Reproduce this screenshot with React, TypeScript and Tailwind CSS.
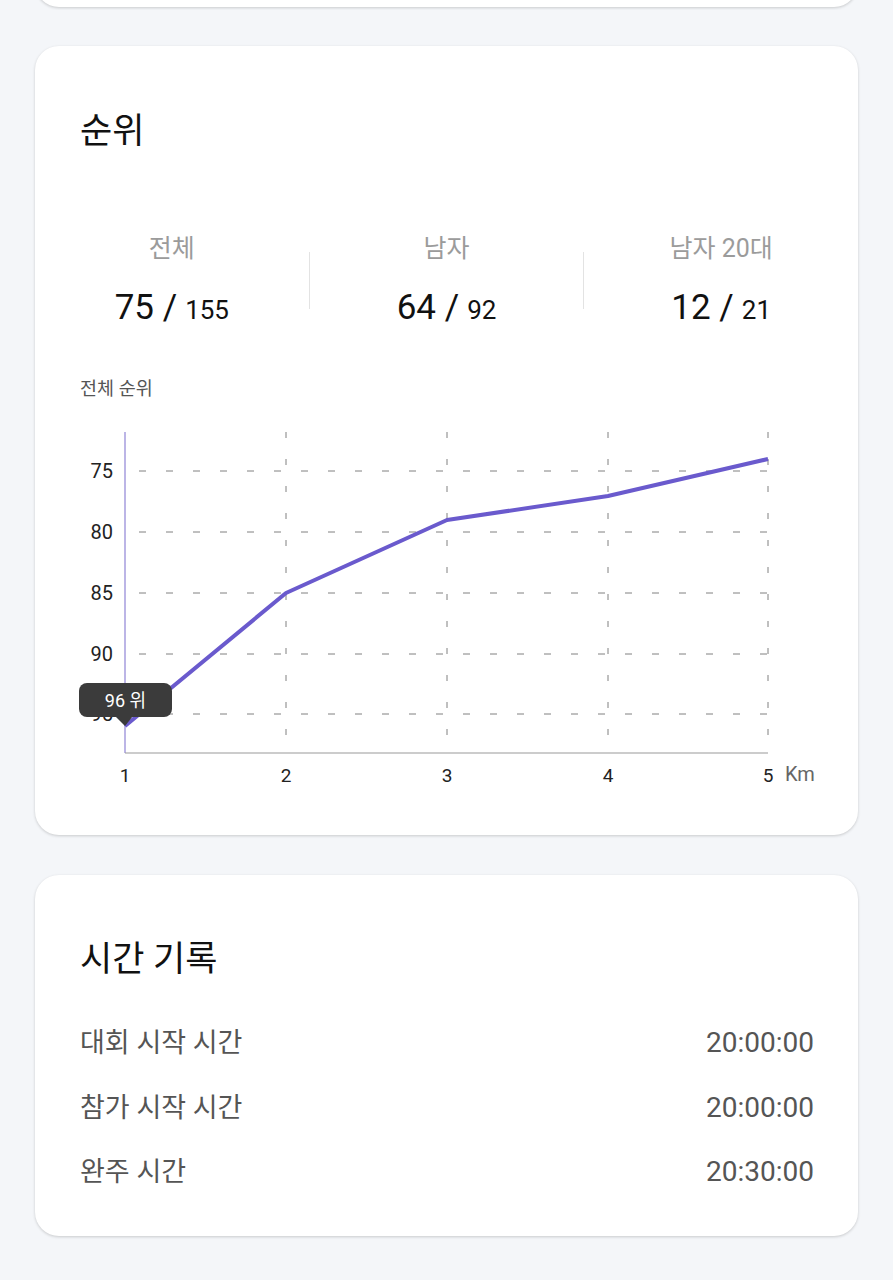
import React from "react";

const FONT = 'Roboto, "Noto Sans CJK KR", sans-serif';

function Chart() {
  const yTicks = [
    { v: 75, y: 51 },
    { v: 80, y: 112 },
    { v: 85, y: 173 },
    { v: 90, y: 234 },
    { v: 95, y: 294 },
  ];
  const xs = [90, 251, 412, 573, 733];
  const pts = [
    [90, 306],
    [251, 173],
    [412, 100],
    [573, 76],
    [733, 39],
  ];
  return (
    <div className="relative h-[380px] w-full">
      <svg width="823" height="380" viewBox="0 0 823 380" className="block">
        {yTicks.map((t) => (
          <line key={t.v} x1={90} x2={733} y1={t.y} y2={t.y} stroke="#808080" strokeWidth={1} strokeDasharray="7 20" strokeDashoffset={-14} />
        ))}
        {xs.slice(1).map((x) => (
          <line key={x} x1={x} x2={x} y1={12} y2={333} stroke="#808080" strokeWidth={1} strokeDasharray="6 21" />
        ))}
        <line x1={90} x2={90} y1={12} y2={333} stroke="#8f84d6" strokeWidth={1.2} />
        <line x1={90} x2={733} y1={333} y2={333} stroke="#9a9a9a" strokeWidth={1.2} />
        {yTicks.map((t) => (
          <text key={t.v} x={78} y={t.y + 7} textAnchor="end" fontSize={20} fill="#222" fontFamily={FONT}>
            {t.v}
          </text>
        ))}
        {xs.map((x, i) => (
          <text key={x} x={x} y={362} textAnchor="middle" fontSize={19} fill="#222" fontFamily={FONT}>
            {i + 1}
          </text>
        ))}
        <text x={750} y={361} fontSize={20} fill="#666" fontFamily={FONT}>
          Km
        </text>
        <polyline
          points={pts.map((p) => p.join(",")).join(" ")}
          fill="none"
          stroke="#6a5acd"
          strokeWidth={4}
          strokeLinejoin="round"
        />
        <path d="M80 296 L90 306 L98 296 Z" fill="#3b3b3b" />
      </svg>
      <div className="absolute left-[44px] top-[263px] flex h-[34px] w-[93px] items-center justify-center rounded-[8px] bg-[#3b3b3b] text-[18px] text-white">
        96 위
      </div>
    </div>
  );
}

function Stat({ label, big, small }: { label: string; big: string; small: string }) {
  return (
    <div className="flex flex-1 flex-col items-center">
      <div className="text-[25px] leading-[32px] text-[#9b9b9b]">{label}</div>
      <div className="mt-[23px] flex items-baseline leading-[40px] text-[#111]">
        <span className="text-[35px]">{big} /</span>
        <span className="ml-[8px] text-[26px]">{small}</span>
      </div>
    </div>
  );
}

function Row({ label, value }: { label: string; value: string }) {
  return (
    <div className="flex items-center justify-between pl-[45px] pr-[44px] leading-[40px] text-[#555]">
      <span className="text-[27px]">{label}</span>
      <span className="text-[28px]">{value}</span>
    </div>
  );
}

export default function App() {
  return (
    <div className="min-h-[1280px] w-full bg-[#f4f6f9] px-[35px]" style={{ fontFamily: FONT }}>
      <div className="h-[10px] overflow-hidden">
        <div className="-mt-[53px] h-[60px] rounded-[24px] bg-white shadow-[0_1px_3px_rgba(0,0,0,0.18)]" />
      </div>
      <div className="mt-[36px] rounded-[24px] bg-white pb-[35px] pt-[66px] shadow-[0_1px_3px_rgba(0,0,0,0.18)]">
        <div className="px-[45px] text-[35px] leading-[40px] text-[#111]">순위</div>
        <div className="mt-[81px] flex">
          <Stat label="전체" big="75" small="155" />
          <div className="mt-[19px] h-[57px] w-px bg-[#e3e3e3]" />
          <Stat label="남자" big="64" small="92" />
          <div className="mt-[19px] h-[57px] w-px bg-[#e3e3e3]" />
          <Stat label="남자 20대" big="12" small="21" />
        </div>
        <div className="mt-[47px] px-[45px] text-[18.5px] leading-[24px] text-[#555]">전체 순위</div>
        <div className="mt-[19px]">
          <Chart />
        </div>
      </div>
      <div className="mt-[40px] rounded-[24px] bg-white pb-[44px] pt-[65px] shadow-[0_1px_3px_rgba(0,0,0,0.18)]">
        <div className="px-[45px] text-[35px] leading-[40px] text-[#111]">시간 기록</div>
        <div className="mt-[43px] flex flex-col gap-[24.5px]">
          <Row label="대회 시작 시간" value="20:00:00" />
          <Row label="참가 시작 시간" value="20:00:00" />
          <Row label="완주 시간" value="20:30:00" />
        </div>
      </div>
    </div>
  );
}
